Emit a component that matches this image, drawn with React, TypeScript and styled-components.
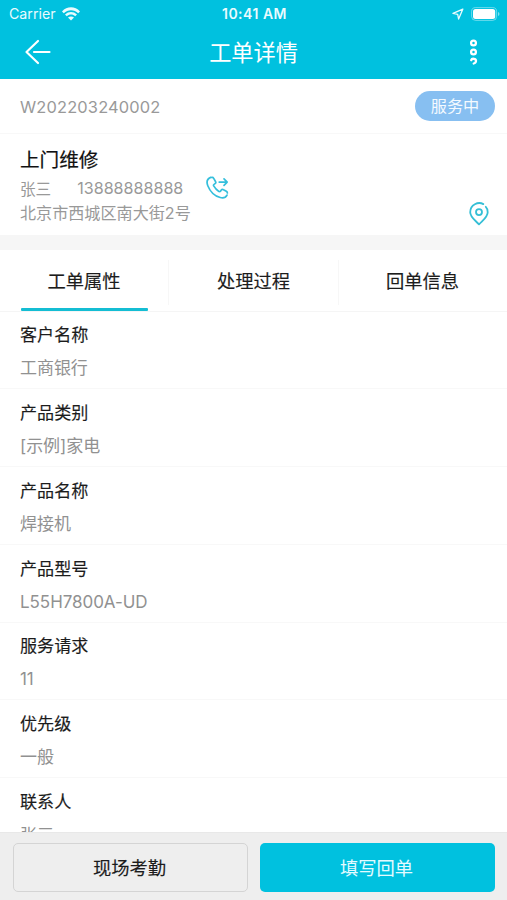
import React from "react";
import styled, { createGlobalStyle } from "styled-components";

const CYAN = "#00c1df";

const GlobalStyle = createGlobalStyle`
  * { box-sizing: border-box; }
  html, body { margin: 0; background: #fff; }
  body { font-family: Inter, "Noto Sans CJK SC", sans-serif; color: #1c1c1c; }
  button { font: inherit; }
  svg { display: block; }
`;

const Screen = styled.div`
  width: 507px;
  height: 900px;
  display: flex;
  flex-direction: column;
  overflow: hidden;
  background: #fff;
  white-space: nowrap;
`;

const Header = styled.header`
  flex: none;
  height: 79px;
  background: ${CYAN};
  color: #fff;
`;

const StatusBar = styled.div`
  height: 27px;
  padding: 0 7px 0 9px;
  display: grid;
  grid-template-columns: 1fr auto 1fr;
  align-items: center;
  font-size: 14px;
  line-height: 27px;
  color: #e9fbfe;
`;

const Carrier = styled.div`
  display: flex;
  align-items: center;
  gap: 6px;
  font-size: 14.2px;
`;

const Clock = styled.div`
  font-weight: 600;
  font-size: 14px;
  letter-spacing: 0.5px;
`;

const StatusIcons = styled.div`
  display: flex;
  justify-content: flex-end;
  align-items: center;
  gap: 7px;
`;

const NavBar = styled.div`
  height: 52px;
  padding: 0 28px 0 24px;
  display: grid;
  grid-template-columns: 1fr auto 1fr;
  align-items: center;
`;

const NavTitle = styled.h1`
  margin: 0 -2px 1px 2px;
  font-size: 22.2px;
  line-height: 51px;
  font-weight: 400;
`;

const NavButton = styled.button<{ $end?: boolean }>`
  border: 0;
  padding: 0;
  margin: 0 0 2px;
  background: none;
  color: #fff;
  justify-self: ${(p) => (p.$end ? "end" : "start")};
`;

const OrderBar = styled.section`
  flex: none;
  height: 55px;
  padding: 0 12px 0 20px;
  display: flex;
  align-items: center;
  justify-content: space-between;
  border-bottom: 1px solid #f8f8f8;
`;

const OrderNumber = styled.span`
  padding-top: 1px;
  font-size: 16.4px;
  color: #999;
  letter-spacing: 0.17px;
`;

const StatusBadge = styled.span`
  width: 80px;
  height: 30px;
  border-radius: 15px;
  background: #87bff1;
  color: #f4faff;
  font-size: 16.2px;
  line-height: 31px;
  text-align: center;
`;

const Summary = styled.section`
  flex: none;
  height: 101px;
  padding: 12px 18px 0 20px;
  color: #999;
`;

const ServiceType = styled.h2`
  margin: 0;
  font-size: 19.6px;
  line-height: 29px;
  font-weight: 400;
  -webkit-text-stroke: 0.2px currentColor;
  color: #111;
`;

const ContactLine = styled.div`
  height: 25px;
  display: flex;
  align-items: center;
  font-size: 15.6px;
`;

const Phone = styled.span`
  margin: 0 23px 0 26px;
  padding-top: 1px;
  font-size: 16.1px;
`;

const AddressLine = styled.div`
  height: 27px;
  display: flex;
  align-items: center;
  justify-content: space-between;
  font-size: 16.1px;
  line-height: 27px;
`;

const PinSlot = styled.span`
  padding-top: 1px;
`;

const Divider = styled.div`
  flex: none;
  height: 15px;
  background: #f6f6f6;
`;

const Tabs = styled.nav`
  flex: none;
  height: 61.5px;
  display: grid;
  grid-template-columns: 169px 170px 168px;
  border-bottom: 1px solid #f5f5f5;
`;

const Tab = styled.button<{ $active?: boolean }>`
  border: 0;
  padding: 10px 0 0;
  background: none;
  color: #1c1c1c;
  font-size: 18.3px;
  -webkit-text-stroke: 0.15px currentColor;
  display: grid;
  grid-template-rows: 48px 3px;
  justify-items: center;
  align-content: start;
  &::after {
    content: "";
    width: 127px;
    height: 3px;
    border-radius: 1px;
    background: ${(p) => (p.$active ? "#14bdd3" : "transparent")};
  }
`;

const TabLabel = styled.span`
  width: 100%;
  height: 45px;
  line-height: 43px;
  text-align: center;
  border-right: 1px solid #f7f7f7;
  ${Tab}:last-child & { border-right-color: transparent; }
`;

const Fields = styled.dl`
  flex: 1;
  min-height: 0;
  margin: 0;
  overflow: hidden;
`;

const Field = styled.div`
  height: 77.8px;
  padding: 7.8px 20px 0;
  border-bottom: 1px solid #f8f8f8;
`;

const FieldLabel = styled.dt`
  font-size: 17.1px;
  line-height: 31px;
  -webkit-text-stroke: 0.15px currentColor;
`;

const FieldValue = styled.dd`
  margin: 2px 0 0;
  font-size: 17px;
  line-height: 32px;
  letter-spacing: -0.05px;
  color: #919191;
`;

const Footer = styled.footer`
  flex: none;
  height: 68px;
  padding: 10px 12px 8px 13px;
  display: grid;
  grid-template-columns: 1fr 1fr;
  gap: 12px;
  background: #eee;
  border-top: 1px solid #e8e8e8;
`;

const ActionButton = styled.button<{ $primary?: boolean }>`
  height: 49px;
  padding: 0 2px 1px 0;
  border: ${(p) => (p.$primary ? "0" : "1.5px solid #d4d4d4")};
  border-radius: 5px;
  background: ${(p) => (p.$primary ? CYAN : "#eee")};
  color: ${(p) => (p.$primary ? "#e4fbff" : "#1c1c1c")};
  font-size: 18.3px;
  -webkit-text-stroke: ${(p) => (p.$primary ? "0" : "0.15px")} currentColor;
`;

const WifiIcon = () => (
  <svg width="18" height="14" viewBox="0 0 18 14" fill="currentColor">
    <path d="M0 4.4C5-1.1 13-1.1 18 4.4L16.2 6.2C12.2 2.1 5.8 2.1 1.8 6.2Z" />
    <path d="M3 7.5C6.5 4.2 11.5 4.2 15 7.5L13.2 9.3C10.7 7 7.3 7 4.8 9.3Z" />
    <path d="M6 10.5C7.8 9.1 10.2 9.1 12 10.5L9 13.6Z" />
  </svg>
);

const LocationArrow = () => (
  <svg width="12" height="12" viewBox="0 0 12 12" fill="none" stroke="currentColor" strokeWidth="1.3" strokeLinejoin="round">
    <path d="M10.8 1.2L1 5.4L5.7 6.3L6.6 11Z" />
  </svg>
);

const BatteryIcon = () => (
  <svg width="29" height="14" viewBox="0 0 29 14">
    <rect x=".6" y=".6" width="25" height="12.8" rx="4" fill="none" stroke="#fff" strokeOpacity=".42" />
    <rect x="2" y="2.1" width="22.2" height="9.8" rx="2.5" fill="#fff" />
    <path d="M27 5V9C29 8.3 29 5.7 27 5Z" fill="#fff" fillOpacity=".5" />
  </svg>
);

const BackIcon = () => (
  <svg width="28" height="26" viewBox="0 0 28 26" fill="none" stroke="currentColor" strokeWidth="2.2" strokeLinecap="round" strokeLinejoin="round">
    <path d="M14 2L2.5 13L14 24M10 13H25.5" />
  </svg>
);

const MoreIcon = () => (
  <svg width="10" height="26" viewBox="0 0 10 26" fill="none" stroke="currentColor" strokeWidth="2.3" strokeLinecap="round">
    <circle cx="4.5" cy="4" r="2.4" />
    <circle cx="4.5" cy="13" r="2.4" />
    <path d="M2.2 21.2C2.9 19 7.1 19.4 7 22C6.9 23.4 6 24.2 4.7 24.5" />
  </svg>
);

const CallIcon = () => (
  <svg width="23" height="23" viewBox="0 0 23 23" fill="none" stroke="#35bfdc" strokeWidth="1.7" strokeLinecap="round" strokeLinejoin="round">
    <path d="M4.7 1.4C1.2 2.8.4 6.1 1.8 9.7C3.9 15 8.7 20 14.2 21.5C17.4 22.3 19.8 21.4 21 19.1M21.4 16.9C21.4 16.2 20.9 15.7 20.3 15.3L17.5 13.7C16.7 13.2 15.8 13.4 15.3 14.1L14.5 15.2C14.1 15.7 13.5 15.8 12.9 15.4C10.6 14 8.9 12 7.7 9.9C7.4 9.3 7.5 8.7 8 8.4L9.1 7.6C9.8 7.1 10 6.3 9.5 5.5L7.7 2.3C7.3 1.6 6.5 1.2 5.8 1.4" />
    <path d="M13.2 6.1H21.2M18 2.9L21.2 6.1L18 9.3" />
  </svg>
);

const PinIcon = () => (
  <svg width="20" height="24" viewBox="0 0 20 24" fill="none" stroke="#35bfd6" strokeWidth="1.8" strokeLinecap="round" strokeLinejoin="round">
    <path d="M14.3 2.1C9.3-.7 1.2 2.6 1.2 10.2C1.2 15.3 6.6 18.6 10 22.4C13.4 18.6 18.7 15.3 18.7 10.2C18.7 7.6 18.2 6.1 16.8 4.8" />
    <circle cx="10" cy="10.1" r="3" />
  </svg>
);

const fields = [
  ["客户名称", "工商银行"],
  ["产品类别", "[示例]家电"],
  ["产品名称", "焊接机"],
  ["产品型号", "L55H7800A-UD"],
  ["服务请求", "11"],
  ["优先级", "一般"],
  ["联系人", "张三"],
];

export default function App() {
  return (
    <>
      <GlobalStyle />
      <Screen>
        <Header>
          <StatusBar>
            <Carrier>Carrier <WifiIcon /></Carrier>
            <Clock>10:41 AM</Clock>
            <StatusIcons><LocationArrow /><BatteryIcon /></StatusIcons>
          </StatusBar>
          <NavBar>
            <NavButton aria-label="返回"><BackIcon /></NavButton>
            <NavTitle>工单详情</NavTitle>
            <NavButton $end aria-label="更多"><MoreIcon /></NavButton>
          </NavBar>
        </Header>
        <OrderBar>
          <OrderNumber>W202203240002</OrderNumber>
          <StatusBadge>服务中</StatusBadge>
        </OrderBar>
        <Summary>
          <ServiceType>上门维修</ServiceType>
          <ContactLine>张三<Phone>13888888888</Phone><CallIcon /></ContactLine>
          <AddressLine>北京市西城区南大街2号<PinSlot><PinIcon /></PinSlot></AddressLine>
        </Summary>
        <Divider />
        <Tabs>
          <Tab $active><TabLabel>工单属性</TabLabel></Tab>
          <Tab><TabLabel>处理过程</TabLabel></Tab>
          <Tab><TabLabel>回单信息</TabLabel></Tab>
        </Tabs>
        <Fields>
          {fields.map(([label, value]) => (
            <Field key={label}>
              <FieldLabel>{label}</FieldLabel>
              <FieldValue>{value}</FieldValue>
            </Field>
          ))}
        </Fields>
        <Footer>
          <ActionButton>现场考勤</ActionButton>
          <ActionButton $primary>填写回单</ActionButton>
        </Footer>
      </Screen>
    </>
  );
}
